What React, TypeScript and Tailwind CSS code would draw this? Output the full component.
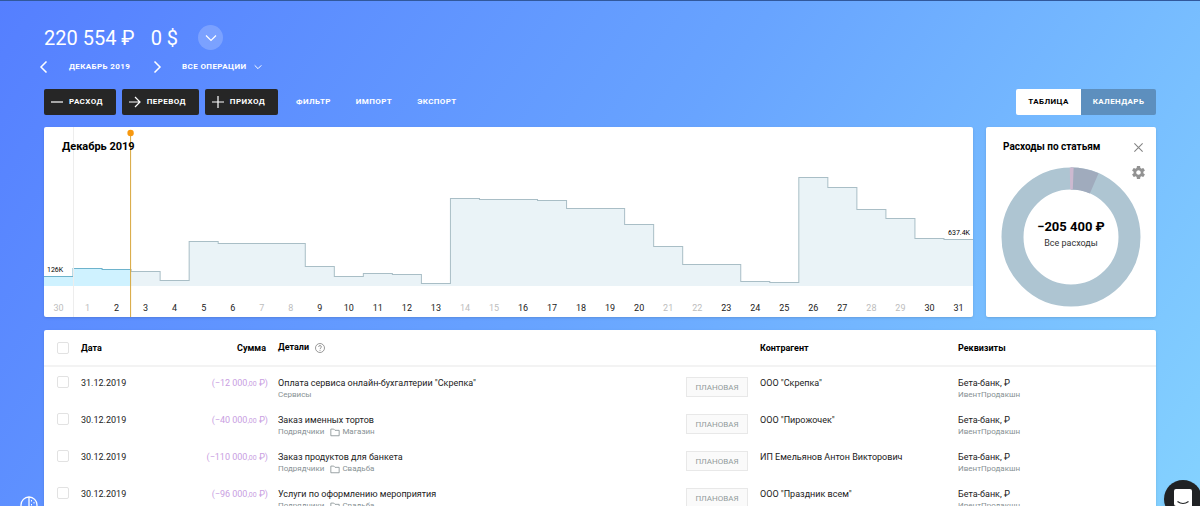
import { ReactNode } from "react";

const DAY_WIDTH = 29;
const CHART_BASE = 159;

// height of the balance step for every day, starting with 30 November
const balance = [
  10, 18, 17, 15, 6, 45, 43, 43, 43, 20, 10, 13, 12, 3, 88, 87, 87, 86, 78, 78, 62, 40, 22, 22, 5, 4, 109, 99, 77, 68,
  48, 47,
];

const days = balance.map((_, i) => (i === 0 ? 30 : i));
const mutedDays = [0, 1, 7, 8, 14, 15, 21, 22, 28, 29];

type Operation = {
  date: string;
  sum: string;
  title: string;
  category: string;
  project?: string;
  partner: string;
};

const operations: Operation[] = [
  {
    date: "31.12.2019",
    sum: "12 000",
    title: 'Оплата сервиса онлайн-бухгалтерии "Скрепка"',
    category: "Сервисы",
    partner: 'ООО "Скрепка"',
  },
  {
    date: "30.12.2019",
    sum: "40 000",
    title: "Заказ именных тортов",
    category: "Подрядчики",
    project: "Магазин",
    partner: 'ООО "Пирожочек"',
  },
  {
    date: "30.12.2019",
    sum: "110 000",
    title: "Заказ продуктов для банкета",
    category: "Подрядчики",
    project: "Свадьба",
    partner: "ИП Емельянов Антон Викторович",
  },
  {
    date: "30.12.2019",
    sum: "96 000",
    title: "Услуги по оформлению мероприятия",
    category: "Подрядчики",
    project: "Свадьба",
    partner: 'ООО "Праздник всем"',
  },
];

function stepPath(from: number, to: number) {
  let d = "";
  for (let i = from; i < to; i++) {
    const y = CHART_BASE - balance[i] + 0.5;
    d += `${i === from ? "M" : "L"}${i * DAY_WIDTH} ${y}H${(i + 1) * DAY_WIDTH}`;
  }
  return d;
}

function Icon({ d, className, width = 1.5 }: { d: string; className: string; width?: number }) {
  return (
    <svg viewBox="0 0 12 12" className={className} fill="none" stroke="currentColor" strokeWidth={width} aria-hidden>
      <path d={d} />
    </svg>
  );
}

function ActionButton({ icon, children }: { icon: string; children: ReactNode }) {
  return (
    <button className="flex h-[26px] items-center gap-1.5 rounded-xs bg-[#262626] pl-[7px] pr-[13px] tracking-wider text-white">
      <Icon d={icon} className="h-3 w-3" width={1.2} />
      {children}
    </button>
  );
}

function Checkbox({ label }: { label: string }) {
  return (
    <input
      type="checkbox"
      aria-label={label}
      className="block h-3 w-3 appearance-none rounded-xs border border-[#e2e2e2] bg-white checked:bg-[#5b8dff]"
    />
  );
}

function BalanceChart() {
  const total = balance.length * DAY_WIDTH;
  const today = 3;
  const past = stepPath(0, today);
  const future = stepPath(today, balance.length);

  return (
    <section className="relative min-w-0 flex-1 overflow-hidden rounded-xs bg-white shadow-sm">
      <svg viewBox={`0 0 ${total} 190`} preserveAspectRatio="none" className="block h-[190px] w-full" aria-hidden>
        <path d={`${past}V${CHART_BASE}H0Z`} fill="#cff2ff" />
        <path d={`${future}V${CHART_BASE}H${today * DAY_WIDTH}Z`} fill="#eaf3f7" />
        <path d={past} fill="none" stroke="#6eb3cc" />
        <path
          d={`M${today * DAY_WIDTH} ${CHART_BASE - balance[today - 1]}${future.replace("M", "L")}`}
          fill="none"
          stroke="#a9bec6"
        />
        <path d="M29.5 0V190" stroke="#ededed" />
        <path d={`M${today * DAY_WIDTH - 0.5} 5V190`} stroke="#d8a73c" />
        <circle cx={today * DAY_WIDTH - 0.5} cy="6" r="3.2" fill="#f7980f" />
      </svg>
      <h2 className="absolute left-[18px] top-3 text-[11px] leading-4 font-bold">Декабрь 2019</h2>
      <span className="absolute left-[3px] top-[137px] text-[7px] leading-3">126K</span>
      <span className="absolute right-[3px] top-[100px] text-[7px] leading-3">637.4K</span>
      <ol className="absolute inset-x-0 bottom-0 flex h-4 text-center text-[9px] leading-[14px]">
        {days.map((day, i) => (
          <li key={i} className={`flex-1 ${mutedDays.includes(i) ? "text-[#bdbdbd]" : "text-[#222]"}`}>
            {day}
          </li>
        ))}
      </ol>
    </section>
  );
}

function ExpensesCard() {
  return (
    <section className="relative w-[170px] shrink-0 rounded-xs bg-white shadow-sm">
      <div className="flex items-center justify-between pl-[17px] pr-3 pt-3">
        <h2 className="text-[10px] leading-4 font-bold">Расходы по статьям</h2>
        <button aria-label="Закрыть">
          <Icon
            d="M1.500 1.500 10.500 10.500M10.500 1.500 1.500 10.500"
            className="h-[11px] w-[11px] text-[#858585]"
            width={1.2}
          />
        </button>
      </div>
      <div className="relative mt-3 ml-[15px] h-[140px] w-[140px]">
        <svg viewBox="0 0 140 140" className="h-full w-full" fill="none" strokeWidth="22" aria-hidden>
          <circle cx="70" cy="70" r="58.5" stroke="#aec5d2" />
          <circle
            cx="70"
            cy="70"
            r="58.5"
            stroke="#a0abbd"
            pathLength="1000"
            strokeDasharray="65 935"
            transform="rotate(-90 70 70)"
          />
          <circle
            cx="70"
            cy="70"
            r="58.5"
            stroke="#cdb9d0"
            pathLength="1000"
            strokeDasharray="9 991"
            transform="rotate(-91 70 70)"
          />
        </svg>
        <div className="absolute inset-0 flex flex-col items-center justify-center pb-1">
          <p className="text-[13px] leading-4 font-bold">−205 400 ₽</p>
          <p className="text-[9px] leading-4 text-[#333]">Все расходы</p>
        </div>
      </div>
      <button aria-label="Настройки" className="absolute right-[11px] top-[39px]">
        <svg viewBox="2 2 20 20" className="h-[13px] w-[13px]" fill="#929292" aria-hidden>
          <path d="M19.43 12.98c.04-.32.07-.64.07-.98s-.03-.66-.07-.98l2.110-1.650c.19-.15.24-.42.12-.64l-2-3.460c-.12-.22-.39-.3-.61-.22l-2.490 1c-.52-.4-1.080-.73-1.690-.98l-.38-2.650C14.460 2.180 14.250 2 14 2h-4c-.25 0-.46.18-.49.42l-.38 2.650c-.61.25-1.170.59-1.690.98l-2.490-1c-.23-.09-.49 0-.61.22l-2 3.460c-.13.22-.07.49.12.64l2.110 1.650c-.04.32-.07.65-.07.98s.03.66.07.98l-2.110 1.650c-.19.15-.24.42-.12.64l2 3.460c.12.22.39.3.61.22l2.490-1c.52.4 1.080.73 1.690.98l.38 2.650c.03.24.24.42.49.42h4c.25 0 .46-.18.49-.42l.38-2.650c.61-.25 1.170-.59 1.690-.98l2.490 1c.23.09.49 0 .61-.22l2-3.460c.12-.22.07-.49-.12-.64l-2.110-1.650zM12 15.500c-1.930 0-3.500-1.570-3.500-3.500s1.570-3.500 3.500-3.500 3.500 1.570 3.500 3.500-1.570 3.500-3.500 3.500z" />
        </svg>
      </button>
    </section>
  );
}

function OperationRow({ date, sum, title, category, project, partner }: Operation) {
  return (
    <tr className="h-[37px] align-top">
      <td className="pl-[13px] pt-[9px]">
        <Checkbox label={`Выбрать: ${title}`} />
      </td>
      <td className="pt-[10px]">{date}</td>
      <td className="pt-[10px] pr-[10px] text-right text-[#c9a0e2]">
        (−{sum}
        <span className="text-[7px]">,00</span> ₽)
      </td>
      <td className="pt-[10px]">
        <p>{title}</p>
        <p className="flex items-center gap-1.5 text-[8px] leading-[10px] text-[#879194]">
          {category}
          {project && (
            <span className="flex items-center gap-0.5">
              <Icon d="M1 2.500H4.500L6 4H11V10.500H1Z" className="h-2.5 w-2.5" width={1} />
              {project}
            </span>
          )}
        </p>
      </td>
      <td className="pt-[10px]">
        <span className="flex h-5 w-[62px] items-center justify-center border border-[#e8e8e8] bg-[#fafafa] text-[8px] text-[#929b9b]">
          ПЛАНОВАЯ
        </span>
      </td>
      <td className="pt-[10px]">{partner}</td>
      <td className="pt-[10px]">
        <p>Бета-банк, ₽</p>
        <p className="text-[8px] leading-[10px] text-[#879194]">ИвентПродакшн</p>
      </td>
    </tr>
  );
}

export default function App() {
  return (
    <main className="relative h-screen overflow-hidden border-t border-[#31589c] bg-linear-[125deg,#557fff,#68a4ff_50%,#84d2ff] font-['Roboto','Noto_Sans',sans-serif] text-black">
      <div className="px-11 pt-6">
        <header className="flex items-center gap-4 text-xl leading-6 text-white">
          <span>220 554 ₽</span>
          <span>0 $</span>
          <button
            aria-label="Все счета"
            className="ml-1 flex h-[25px] w-[25px] items-center justify-center rounded-full bg-white/20"
          >
            <Icon d="M1 3.500 6 8.500 11 3.500" className="h-3 w-3" width={1.2} />
          </button>
        </header>

        <nav className="-ml-1.5 mt-2 flex h-[18px] items-center text-[8px] font-bold tracking-wider text-white">
          <button aria-label="Предыдущий месяц">
            <Icon d="M8.500 0.500 3 6 8.500 11.500" className="h-3 w-3" />
          </button>
          <span className="ml-[19px] w-[66px] whitespace-nowrap">ДЕКАБРЬ 2019</span>
          <button aria-label="Следующий месяц" className="ml-4">
            <Icon d="M3.500 0.500 9 6 3.500 11.500" className="h-3 w-3" />
          </button>
          <button className="ml-[19px] flex items-center gap-2 tracking-wider">
            ВСЕ ОПЕРАЦИИ
            <Icon d="M1 3.500 6 8.500 11 3.500" className="h-2 w-2" />
          </button>
        </nav>

        <div className="mt-[13px] flex items-center justify-between text-[8px] font-bold text-white">
          <div className="flex items-center gap-1.5">
            <ActionButton icon="M0 6H12">РАСХОД</ActionButton>
            <ActionButton icon="M0 6H11M6 1 11 6 6 11">ПЕРЕВОД</ActionButton>
            <ActionButton icon="M0 6H12M6 0V12">ПРИХОД</ActionButton>
            <div className="ml-3 flex gap-[25px]">
              <button className="tracking-wider">ФИЛЬТР</button>
              <button className="tracking-wider">ИМПОРТ</button>
              <button className="tracking-wider">ЭКСПОРТ</button>
            </div>
          </div>
          <div className="flex h-[26px] overflow-hidden rounded-xs">
            <button className="w-[65px] bg-white tracking-wider text-black">ТАБЛИЦА</button>
            <button className="w-[75px] bg-[#5d8fbe] tracking-wider">КАЛЕНДАРЬ</button>
          </div>
        </div>

        <div className="mt-3 flex gap-[13px]">
          <BalanceChart />
          <ExpensesCard />
        </div>

        <section className="mt-[13px] rounded-xs bg-white pb-10 shadow-sm">
          <table className="w-full table-fixed border-separate border-spacing-0 text-left text-[9px] leading-[13px] text-[#222]">
            <colgroup>
              <col className="w-[37px]" />
              <col className="w-[90px]" />
              <col className="w-[107px]" />
              <col />
              <col className="w-[74px]" />
              <col className="w-[198px]" />
              <col className="w-[198px]" />
            </colgroup>
            <thead className="text-black">
              <tr className="h-[37px] *:border-b-2 *:border-[#f3f3f3]">
                <th className="pl-[13px]">
                  <Checkbox label="Выбрать все" />
                </th>
                <th className="pt-0.5">Дата</th>
                <th className="pt-0.5 pr-3 text-right">Сумма</th>
                <th>
                  <span className="flex items-center gap-1.5">
                    Детали
                    <button aria-label="Справка" className="text-[#858585]">
                      <Icon
                        d="M6 0.600A5.400 5.400 0 1 1 6 11.400A5.400 5.400 0 1 1 6 0.600M4.300 4.700C4.300 2.500 7.700 2.500 7.700 4.700C7.700 5.900 6 5.900 6 7.300M6 8.300V9.500"
                        className="h-2.5 w-2.5"
                        width={1}
                      />
                    </button>
                  </span>
                </th>
                <th aria-label="Статус" />
                <th className="pt-0.5">Контрагент</th>
                <th className="pt-0.5">Реквизиты</th>
              </tr>
            </thead>
            <tbody>
              {operations.map((operation) => (
                <OperationRow key={operation.title} {...operation} />
              ))}
            </tbody>
          </table>
        </section>
      </div>

      <button aria-label="Тема" className="absolute -bottom-2 left-5 text-white">
        <svg viewBox="0 0 18 18" className="h-[18px] w-[18px]" fill="none" stroke="currentColor" aria-hidden>
          <circle cx="9" cy="9" r="8" strokeWidth="1.3" />
          <path d="M9 1V17" strokeWidth="1.3" />
          <path d="M11.500 4v1.500M14 6v1.500M11.500 8v1.500M14 10v1.500" />
        </svg>
      </button>
      <button
        aria-label="Чат"
        className="absolute -right-0.5 -bottom-3 flex h-[38px] w-[38px] items-center justify-center rounded-full bg-[#202224] shadow-md"
      >
        <svg viewBox="0 0 18 20" className="h-5 w-[18px]" aria-hidden>
          <path d="M2 0H16Q18 0 18 2V20L14 17H2Q0 17 0 15V2Q0 0 2 0Z" fill="#fff" />
          <path d="M3.500 12.500Q9 16.500 14.500 12.500" fill="none" stroke="#202224" strokeWidth="1.2" />
        </svg>
      </button>
    </main>
  );
}
